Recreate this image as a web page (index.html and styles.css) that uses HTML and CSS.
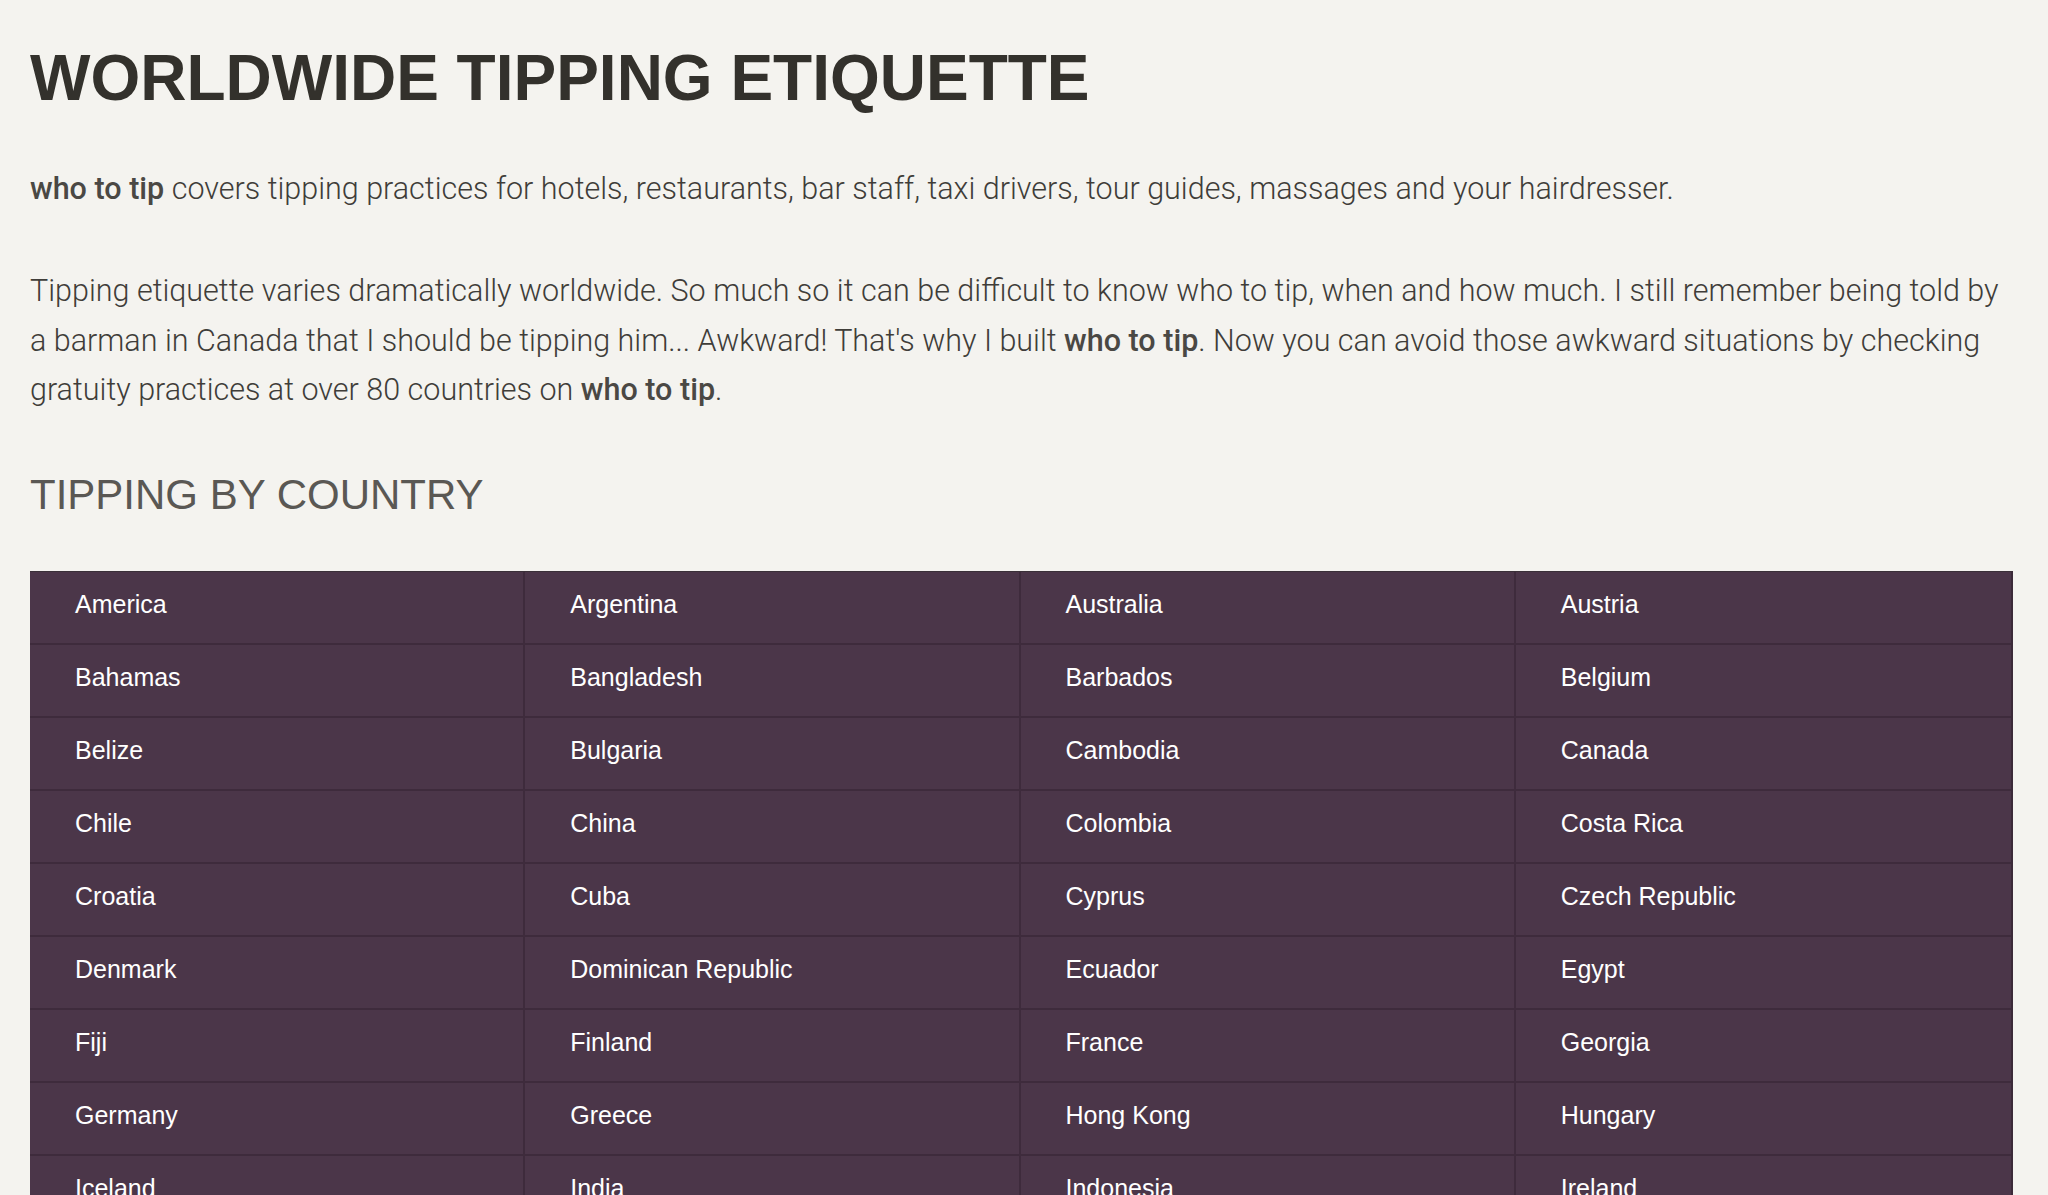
FILE: index.html
```html
<!DOCTYPE html>
<html lang="en">
<head>
<meta charset="utf-8">
<title>Worldwide Tipping Etiquette</title>
<link rel="stylesheet" href="styles.css">
</head>
<body>
<main class="page">
  <h1 class="title">WORLDWIDE TIPPING ETIQUETTE</h1>
  <p class="intro"><strong>who to tip</strong> covers tipping practices for hotels, restaurants, bar staff, taxi drivers, tour guides, massages and your hairdresser.</p>
  <p class="intro second">Tipping etiquette varies dramatically worldwide. So much so it can be difficult to know who to tip, when and how much. I still remember being told by a barman in Canada that I should be tipping him... Awkward! That's why I built <strong>who to tip</strong>. Now you can avoid those awkward situations by checking gratuity practices at over 80 countries on <strong>who to tip</strong>.</p>
  <h2 class="section-title">TIPPING BY COUNTRY</h2>
  <ul class="countries">
    <li>America</li><li>Argentina</li><li>Australia</li><li>Austria</li>
    <li>Bahamas</li><li>Bangladesh</li><li>Barbados</li><li>Belgium</li>
    <li>Belize</li><li>Bulgaria</li><li>Cambodia</li><li>Canada</li>
    <li>Chile</li><li>China</li><li>Colombia</li><li>Costa Rica</li>
    <li>Croatia</li><li>Cuba</li><li>Cyprus</li><li>Czech Republic</li>
    <li>Denmark</li><li>Dominican Republic</li><li>Ecuador</li><li>Egypt</li>
    <li>Fiji</li><li>Finland</li><li>France</li><li>Georgia</li>
    <li>Germany</li><li>Greece</li><li>Hong Kong</li><li>Hungary</li>
    <li>Iceland</li><li>India</li><li>Indonesia</li><li>Ireland</li>
    <li>Israel</li><li>Italy</li><li>Jamaica</li><li>Japan</li>
  </ul>
</main>
</body>
</html>
```

FILE: styles.css
```css
html, body {
  margin: 0;
  padding: 0;
  background: #f4f3ef;
}

.page {
  padding: 0 35px 0 30px;
  font-family: "Liberation Sans", Arial, sans-serif;
}

.title {
  margin: 43px 0 0;
  font-size: 64px;
  line-height: 70px;
  font-weight: 700;
  color: #33312c;
}

.intro {
  margin: 50.5px 0 0;
  font-family: Roboto, "Liberation Sans", sans-serif;
  font-weight: 300;
  font-size: 30.5px;
  line-height: 49.6px;
  color: #3f3d39;
}

.intro strong {
  font-weight: 500;
  color: #4a4844;
}

.intro.second {
  margin-top: 53px;
}

.section-title {
  margin: 55px 0 0;
  font-size: 42px;
  line-height: 50px;
  font-weight: 400;
  color: #5a5854;
}

.countries {
  list-style: none;
  margin: 51.5px 0 0;
  padding: 0;
  display: grid;
  grid-template-columns: repeat(4, 1fr);
  background: #4b3649;
  border-top: 1px solid #3a3038;
  border-right: 2px solid #3b2a39;
}

.countries li {
  padding: 0 20px 6px 45px;
  line-height: 65px;
  font-size: 25px;
  color: #ffffff;
  border-right: 2px solid #3e2b3c;
  border-bottom: 2px solid #3e2b3c;
}

.countries li:nth-child(4n) {
  border-right: none;
}
```
